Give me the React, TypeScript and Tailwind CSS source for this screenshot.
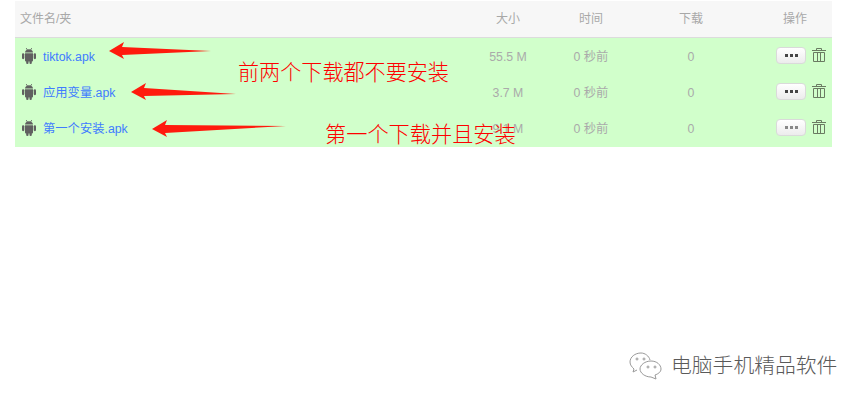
import React from 'react';

const cjk = "font-['Liberation_Sans','Noto_Sans_CJK_SC',sans-serif]";

const files = [
  { name: 'tiktok.apk', size: '55.5 M', dot: 'bg-[#444]' },
  { name: '应用变量.apk', size: '3.7 M', dot: 'bg-[#444]' },
  { name: '第一个安装.apk', size: '9.1 M', dot: 'bg-[#888]' },
];

const Arrow = ({ width, drop }: { width: number; drop: number }) => (
  <svg width={width} height="18" viewBox={`0 0 ${width} 18`}>
    <path d={`M0 9 L15 0 L13 5 L${width} ${9 + drop} L13 13 L15 17 Z`} fill="#ff1a0d" />
  </svg>
);

const AndroidIcon = () => (
  <svg width="14" height="16" viewBox="0 0 14 16" fill="#606060" className="-mt-[2px]">
    <path d="M3 4.5C3 2.5 4.8 1.2 7 1.2s4 1.3 4 3.3Z" />
    <path d="M4.2 0 5.4 2M9.8 0 8.6 2" stroke="#606060" strokeWidth="0.8" />
    <path d="M3 5.2h8v7.3a1 1 0 0 1-1 1H4a1 1 0 0 1-1-1Z" />
    <rect x="0" y="5.2" width="2.3" height="6" rx="1.1" />
    <rect x="11.7" y="5.2" width="2.3" height="6" rx="1.1" />
    <rect x="4.2" y="12" width="2.3" height="4" rx="1.1" />
    <rect x="7.5" y="12" width="2.3" height="4" rx="1.1" />
  </svg>
);

const TrashIcon = () => (
  <svg width="14" height="14" viewBox="0 0 14 14" fill="none" stroke="#6a7a62" strokeWidth="1">
    <path d="M0 2.5H14M4.5 2.5V0.5H9.5V2.5M1.5 4.5H12.5V13.5H1.5ZM5.5 4.5V13.5M8.5 4.5V13.5" />
  </svg>
);

export default function App() {
  return (
    <div className={`relative w-[865px] h-[404px] bg-white overflow-hidden ${cjk}`}>
      <div className="pt-px pl-[15px] w-[832px]">
        {/* Header */}
        <div className="grid grid-cols-[448px_90px_76px_124px_79px] h-[37px] items-center bg-[#f7f7f7] border-b border-[#dcdcdc] text-xs text-[#a8a8a8]">
          <span className="pl-[5px]">文件名/夹</span>
          <span className="text-center">大小</span>
          <span className="text-center">时间</span>
          <span className="text-center">下载</span>
          <span className="pl-[30px]">操作</span>
        </div>

        {/* Rows */}
        <div className="bg-[#d1ffcb] pb-px">
          {files.map((file) => (
            <div
              key={file.name}
              className="grid grid-cols-[448px_90px_76px_124px_79px] h-[36px] pt-[2px] items-center text-[12.3px] text-[#aaaaaa]"
            >
              <div className="flex items-center pl-[7px] gap-[7px]">
                <AndroidIcon />
                <span className="text-[#3f7cff]">{file.name}</span>
              </div>
              <span className="text-center">{file.size}</span>
              <span className="text-center">0 秒前</span>
              <span className="text-center">0</span>
              <div className="flex items-center gap-[6px] pl-[23px] -mt-[4px]">
                <button className="flex items-center justify-center w-[30px] h-[17px] rounded-[4px] border border-[#dadada] bg-gradient-to-b from-white to-[#ececec] gap-[2px]">
                  <span className={`w-[3px] h-[3px] ${file.dot}`} />
                  <span className={`w-[3px] h-[3px] ${file.dot}`} />
                  <span className={`w-[3px] h-[3px] ${file.dot}`} />
                </button>
                <TrashIcon />
              </div>
            </div>
          ))}
        </div>
      </div>

      {/* Hand-drawn annotations on top of the screenshot */}
      <div className="absolute left-[109px] top-[42px]"><Arrow width={102} drop={0} /></div>
      <div className="absolute left-[131px] top-[83px]"><Arrow width={105} drop={2} /></div>
      <div className="absolute left-[152px] top-[120px]"><Arrow width={134} drop={-3} /></div>
      <div className="absolute left-[238px] top-[58px] text-[21.1px] leading-[30px] font-light text-[#ff0000]">前两个下载都不要安装</div>
      <div className="absolute left-[325px] top-[120px] text-[21.2px] leading-[30px] font-light text-[#ff0000]">第一个下载并且安装</div>

      {/* Watermark */}
      <div className="absolute left-[628px] top-[351px] flex items-center gap-[7px] text-[#5a5a5a]">
        <svg width="36" height="30" viewBox="0 0 36 30" fill="none" stroke="#999" strokeWidth="1">
          <path d="M13 2C7 2 2 6 2 11c0 3 2 5 4 7l-1 3 4-2M22 9c-1-4-5-7-9-7" />
          <path d="M23 10c-6 0-11 4-11 8s5 8 11 8l5 2-1-4c3-1 6-3 6-6 0-4-4-8-10-8Z" />
          <circle cx="9" cy="8" r="1" />
          <circle cx="16" cy="8" r="1" />
          <circle cx="20" cy="16" r="1" />
          <circle cx="27" cy="16" r="1" />
        </svg>
        <span className="text-[20.8px] leading-[30px] font-light">电脑手机精品软件</span>
      </div>
    </div>
  );
}
